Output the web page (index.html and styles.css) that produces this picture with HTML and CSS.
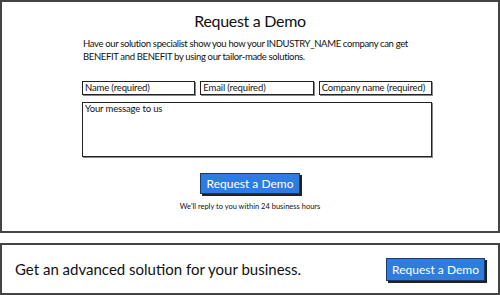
FILE: index.html
```html
<!DOCTYPE html>
<html lang="en">
<head>
<meta charset="UTF-8" />
<meta name="viewport" content="width=device-width, initial-scale=1" />
<title>Request a Demo</title>
<link rel="stylesheet" href="styles.css">
</head>
<body>

<div class="panel demo">
  <h1>Request a Demo</h1>

  <p class="intro">Have our solution specialist show you how your INDUSTRY_NAME company can get<br>BENEFIT and BENEFIT by using our tailor-made solutions.</p>

  <form class="demo-form">
    <div class="fields">
      <div class="field">Name (required)</div>
      <div class="field">Email (required)</div>
      <div class="field">Company name (required)</div>
    </div>
    <div class="message">Your message to us</div>
  </form>

  <div class="actions">
    <button class="btn">Request a Demo</button>
    <div class="note">We'll reply to you within 24 business hours</div>
  </div>
</div>

<div class="panel banner">
  <span class="banner-text">Get an advanced solution for your business.</span>
  <button class="btn btn-small">Request a Demo</button>
</div>

</body>
</html>
```

FILE: styles.css
```css
body {
  margin: 0;
  font-family: Lato, "Open Sans", sans-serif;
  color: #111;
  background: #fff;
}
.panel {
  border: 2px solid #444;
  box-sizing: border-box;
  width: 500px;
}
.demo {
  height: 233px;
  padding-top: 8px;
}
h1 {
  margin: 0;
  text-align: center;
  font-size: 16px;
  font-weight: 400;
  line-height: 22px;
  letter-spacing: -0.3px;
}
.intro {
  margin: 5px 0 0 81px;
  width: 350px;
  font-size: 9.5px;
  line-height: 13px;
  letter-spacing: -0.35px;
  white-space: nowrap;
}
.demo-form {
  margin: 18px 0 0 80px;
  width: 350px;
}
.fields {
  display: flex;
  gap: 5px;
}
.field, .message {
  border: 1px solid #222;
  box-shadow: 1px 1px 0 #888;
  font-size: 9.5px;
  line-height: 12px;
  letter-spacing: -0.15px;
  padding: 0 2px;
  white-space: nowrap;
  overflow: hidden;
}
.field {
  flex: 1;
  height: 12px;
}
.message {
  margin-top: 7px;
  height: 53px;
}
.actions {
  text-align: center;
  margin-top: 15px;
}
.btn {
  font-family: inherit;
  background: #2f7ce0;
  color: #fff;
  border: 1px solid #1a3a6a;
  box-shadow: 2px 2px 0 #222;
  font-size: 12px;
  width: 100px;
  height: 21px;
  padding: 0;
}
.note {
  margin-top: 8px;
  font-size: 7.5px;
}
.banner {
  margin-top: 10px;
  height: 52px;
  display: flex;
  align-items: center;
  justify-content: space-between;
  padding: 0 13px 0 13px;
}
.banner-text {
  font-size: 15px;
}
.btn-small {
  width: 99px;
  height: 23px;
}
```
